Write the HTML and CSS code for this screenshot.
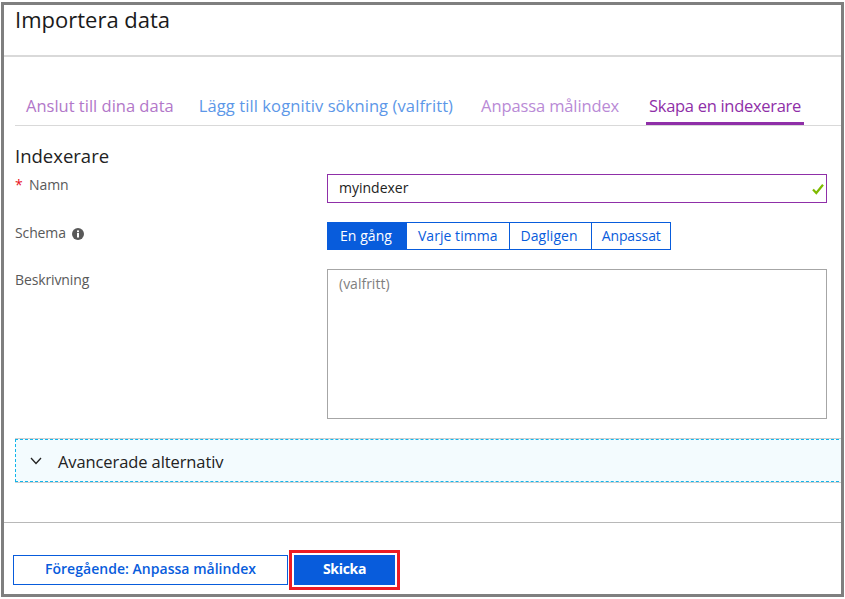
FILE: index.html
```html
<!DOCTYPE html>
<html lang="sv">
<head>
    <meta charset="UTF-8">
    <title>Importera data</title>
    <link rel="stylesheet" href="styles.css">
</head>
<body>
    <div class="frame">
        <h1 class="title">Importera data</h1>
        <div class="tabs">
            <span class="tab tab-connect">Anslut till dina data</span>
            <span class="tab tab-skill">Lägg till kognitiv sökning (valfritt)</span>
            <span class="tab tab-target">Anpassa målindex</span>
            <span class="tab tab-active">Skapa en indexerare</span>
        </div>
        <h2 class="section">Indexerare</h2>
        <div class="row row-name">
            <label class="label"><span class="req">*</span> Namn</label>
            <div class="input-wrap">
                <input class="name" type="text" value="myindexer">
                <svg class="check" width="12" height="12" viewBox="0 0 12 12"><path d="M1 6.5 L4.3 10 L11 1.8" fill="none" stroke="#7fba00" stroke-width="2.2"/></svg>
            </div>
        </div>
        <div class="row row-schedule">
            <label class="label">Schema
                <svg class="info" width="12" height="12" viewBox="0 0 12 12"><circle cx="6" cy="6" r="6" fill="#595959"/><rect x="5" y="5" width="2" height="4.5" fill="#fff"/><rect x="5" y="2.4" width="2" height="1.8" fill="#fff"/></svg>
            </label>
            <div class="segments">
                <span class="seg on">En gång</span>
                <span class="seg">Varje timma</span>
                <span class="seg">Dagligen</span>
                <span class="seg">Anpassat</span>
            </div>
        </div>
        <div class="row row-desc">
            <label class="label">Beskrivning</label>
            <textarea class="desc" placeholder="(valfritt)"></textarea>
        </div>
        <div class="advanced">
            <svg width="12" height="8" viewBox="0 0 12 8"><path d="M1 1 L6 6.5 L11 1" fill="none" stroke="#222" stroke-width="1.3"/></svg>
            <span>Avancerade alternativ</span>
        </div>
        <div class="footer">
            <button class="btn-prev">Föregående: Anpassa målindex</button>
            <div class="highlight"><button class="btn-send">Skicka</button></div>
        </div>
    </div>
</body>
</html>
```
FILE: styles.css
```css
* {
    margin: 0;
    padding: 0;
    box-sizing: border-box;
}
html, body {
    height: 100%;
}
body {
    background: #fff;
    font-family: "Open Sans", "Noto Sans", sans-serif;
    color: #222;
    padding: 2px 1px;
    overflow: hidden;
}
.frame {
    height: 595px;
    border: 3px solid #7f7f7f;
    display: flex;
    flex-direction: column;
    overflow: hidden;
}
.title {
    height: 52px;
    padding: 0 0 0 11px;
    font-size: 22px;
    line-height: 28px;
    font-weight: 400;
    color: #1a1a1a;
    border-bottom: 2px solid #d9d9d9;
    flex-shrink: 0;
}
.tabs {
    display: flex;
    margin: 36px 0 0 11px;
    height: 33px;
    border-bottom: 1px solid #d9d9d9;
    flex-shrink: 0;
}
.tab {
    font-size: 16.5px;
    line-height: 26px;
    padding: 0 3px;
    white-space: nowrap;
    height: 32px;
}
.tab-connect {
    color: #b277c9;
    margin-left: 8px;
    margin-right: 19px;
}
.tab-skill {
    color: #5c97e8;
    margin-right: 22px;
    letter-spacing: 0.1px;
}
.tab-target {
    color: #b98ad6;
    margin-right: 24px;
    letter-spacing: -0.12px;
}
.tab-active {
    color: #8f2fa8;
    border-bottom: 3px solid #8f2fa8;
    letter-spacing: -0.3px;
}
.section {
    margin: 17px 0 0 11px;
    font-size: 18.5px;
    line-height: 25px;
    font-weight: 400;
}
.row {
    display: flex;
    flex-shrink: 0;
}
.label {
    width: 312px;
    margin-left: 11px;
    padding-top: 2px;
    font-size: 14px;
    line-height: 18px;
    color: #595959;
    flex-shrink: 0;
    letter-spacing: -0.12px;
}
.req {
    color: #e81123;
    margin-right: 3px;
}
.row-name {
    margin-top: 6px;
}
.input-wrap {
    position: relative;
    width: 500px;
}
.name {
    display: block;
    width: 100%;
    height: 29px;
    border: 1px solid #8f2fa8;
    padding: 0 11px 2px;
    font: 14px "Open Sans", sans-serif;
    color: #222;
    outline: none;
}
.check {
    position: absolute;
    right: 3px;
    top: 9px;
}
.row-schedule {
    margin-top: 19px;
}
.info {
    vertical-align: -2px;
    margin-left: 3px;
}
.segments {
    display: flex;
    height: 28px;
    border: 1px solid #085cdc;
}
.seg {
    font-size: 14px;
    line-height: 26px;
    letter-spacing: 0.05px;
    color: #085cdc;
    padding: 0 11px;
    border-left: 1px solid #085cdc;
    white-space: nowrap;
}
.seg:nth-child(3) {
    padding: 0 13px 0 11px;
}
.seg:last-child {
    padding: 0 9px 0 10px;
    letter-spacing: -0.1px;
}
.seg.on {
    background: #085cdc;
    color: #fff;
    border-left: 0;
    padding: 0 14px 0 12px;
}
.row-desc {
    margin-top: 19px;
}
.desc {
    display: block;
    width: 500px;
    height: 150px;
    border: 1px solid #a6a6a6;
    padding: 4px 11px;
    font: 14px "Open Sans", sans-serif;
    resize: none;
    outline: none;
}
.desc::placeholder {
    color: #7f7f7f;
    opacity: 1;
}
.advanced {
    margin: 20px -3px 0 11px;
    height: 43px;
    flex-shrink: 0;
    background: #f3fbfe;
    border-top: 1px dashed #12b5ea;
    border-bottom: 1px dashed #12b5ea;
    border-left: 1px dashed #12b5ea;
    box-shadow: 0 -1px 0 #cfcfcf, 0 1px 0 #cfcfcf;
    display: flex;
    align-items: center;
    padding: 1px 0 0 14px;
    font-size: 16.5px;
    letter-spacing: -0.1px;
}
.advanced span {
    margin-left: 16px;
}
.footer {
    margin-top: 40px;
    border-top: 1px solid #b8b8b8;
    padding: 32px 0 0 9px;
    display: flex;
    align-items: flex-start;
}
.btn-prev {
    width: 275px;
    height: 30px;
    padding-bottom: 3px;
    background: #fff;
    border: 1px solid #085cdc;
    color: #085cdc;
    font: 600 14px "Open Sans", sans-serif;
    letter-spacing: 0.03px;
}
.highlight {
    margin: -5px 0 0 1px;
    border: 3px solid #ed1c24;
    padding: 2px;
}
.btn-send {
    display: block;
    width: 101px;
    height: 30px;
    padding-bottom: 3px;
    background: #085cdc;
    border: 0;
    color: #fff;
    font: 700 14px "Open Sans", sans-serif;
    letter-spacing: -0.3px;
}
```
